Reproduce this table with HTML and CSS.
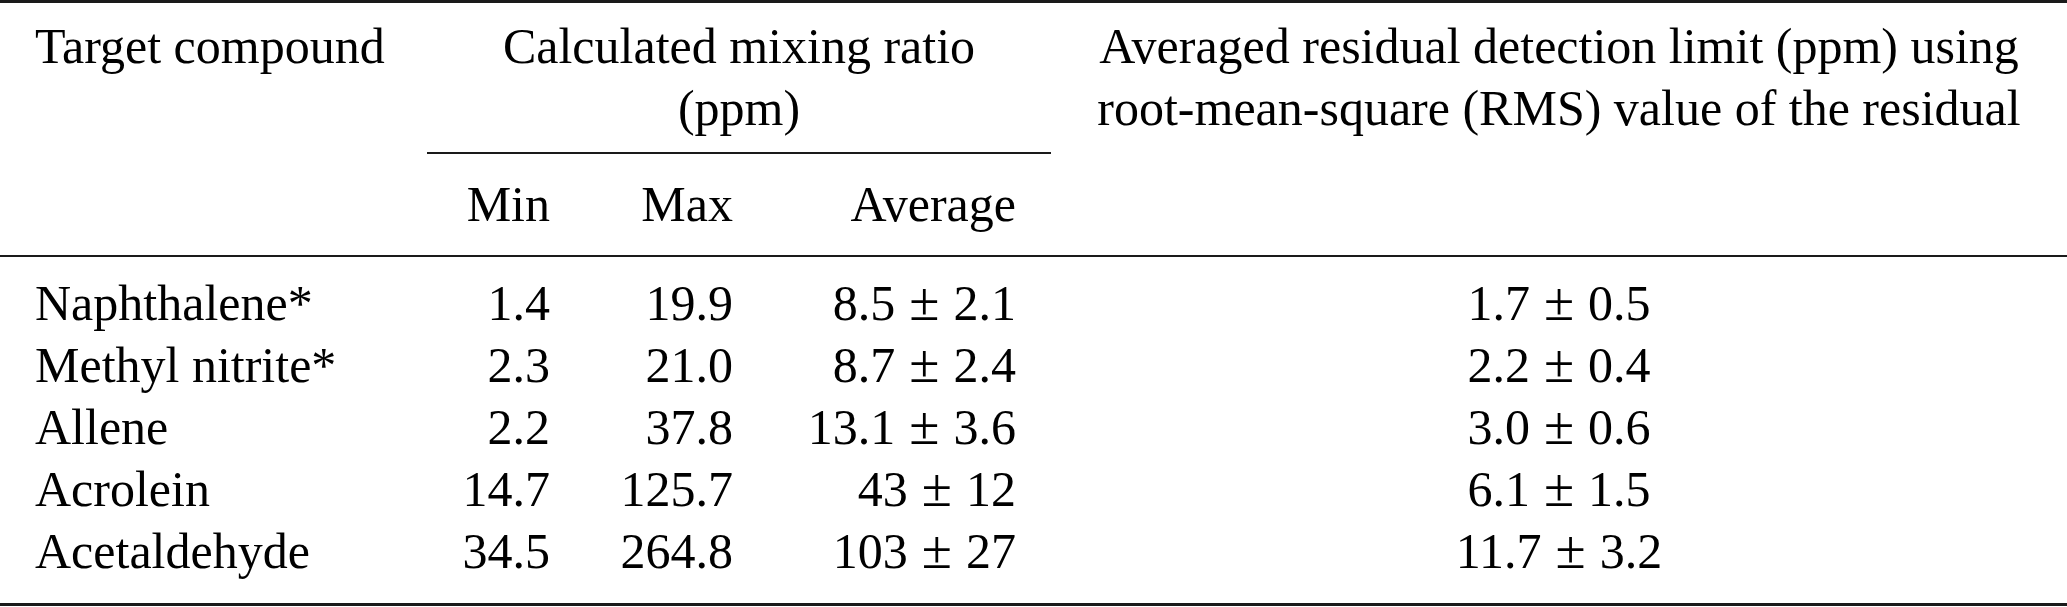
FILE: index.html
```html
<!DOCTYPE html>
<html lang="en">
<head>
<meta charset="utf-8">
<title>Mixing ratios</title>
<link rel="stylesheet" href="styles.css">
</head>
<body>
<table class="tbl">
  <colgroup>
    <col class="c1"><col class="c2"><col class="c3"><col class="c4"><col class="c5">
  </colgroup>
  <thead>
    <tr class="h1">
      <th class="left top" rowspan="2">Target compound</th>
      <th class="center group" colspan="3">Calculated mixing ratio<br>(ppm)</th>
      <th class="center top" rowspan="2">Averaged residual detection limit (ppm) using<br>root-mean-square (RMS) value of the residual</th>
    </tr>
    <tr class="h2">
      <th class="num">Min</th>
      <th class="num">Max</th>
      <th class="num">Average</th>
    </tr>
  </thead>
  <tbody>
    <tr class="first">
      <td class="left">Naphthalene*</td>
      <td class="num">1.4</td>
      <td class="num">19.9</td>
      <td class="num">8.5<span class="pm">±</span>2.1</td>
      <td class="center">1.7<span class="pm">±</span>0.5</td>
    </tr>
    <tr>
      <td class="left">Methyl nitrite*</td>
      <td class="num">2.3</td>
      <td class="num">21.0</td>
      <td class="num">8.7<span class="pm">±</span>2.4</td>
      <td class="center">2.2<span class="pm">±</span>0.4</td>
    </tr>
    <tr>
      <td class="left">Allene</td>
      <td class="num">2.2</td>
      <td class="num">37.8</td>
      <td class="num">13.1<span class="pm">±</span>3.6</td>
      <td class="center">3.0<span class="pm">±</span>0.6</td>
    </tr>
    <tr>
      <td class="left">Acrolein</td>
      <td class="num">14.7</td>
      <td class="num">125.7</td>
      <td class="num">43<span class="pm">±</span>12</td>
      <td class="center">6.1<span class="pm">±</span>1.5</td>
    </tr>
    <tr class="last">
      <td class="left">Acetaldehyde</td>
      <td class="num">34.5</td>
      <td class="num">264.8</td>
      <td class="num">103<span class="pm">±</span>27</td>
      <td class="center">11.7<span class="pm">±</span>3.2</td>
    </tr>
  </tbody>
</table>
</body>
</html>
```

FILE: styles.css
```css
html, body {
  margin: 0;
  padding: 0;
  background: #ffffff;
}

.tbl {
  width: 2067px;
  table-layout: fixed;
  border-collapse: separate;
  border-spacing: 0;
  border-top: 3px solid #1a1a1a;
  border-bottom: 3px solid #1a1a1a;
  font-family: "Liberation Serif", "Times New Roman", serif;
  font-size: 50px;
  line-height: 62px;
  color: #000;
}

.c1 { width: 427px; }
.c2 { width: 158px; }
.c3 { width: 183px; }
.c4 { width: 283px; }
.c5 { width: 1016px; }

.tbl th,
.tbl td {
  padding: 0 35px;
  font-weight: normal;
  white-space: nowrap;
  vertical-align: top;
}

.left { text-align: left; }
.center { text-align: center; }
.num { text-align: right; }

.h1 th {
  padding-top: 12px;
}

.h1 .group {
  padding-bottom: 13px;
  border-bottom: 2px solid #1a1a1a;
}

.h1 .top {
  border-bottom: 2px solid #1a1a1a;
}

.h2 th {
  padding-top: 19px;
  padding-bottom: 20px;
  border-bottom: 2px solid #1a1a1a;
}

.first td {
  padding-top: 15px;
}

.last td {
  padding-bottom: 21px;
}

.pm {
  font-size: 1.1em;
  line-height: 0;
  margin: 0 14px;
}
```
